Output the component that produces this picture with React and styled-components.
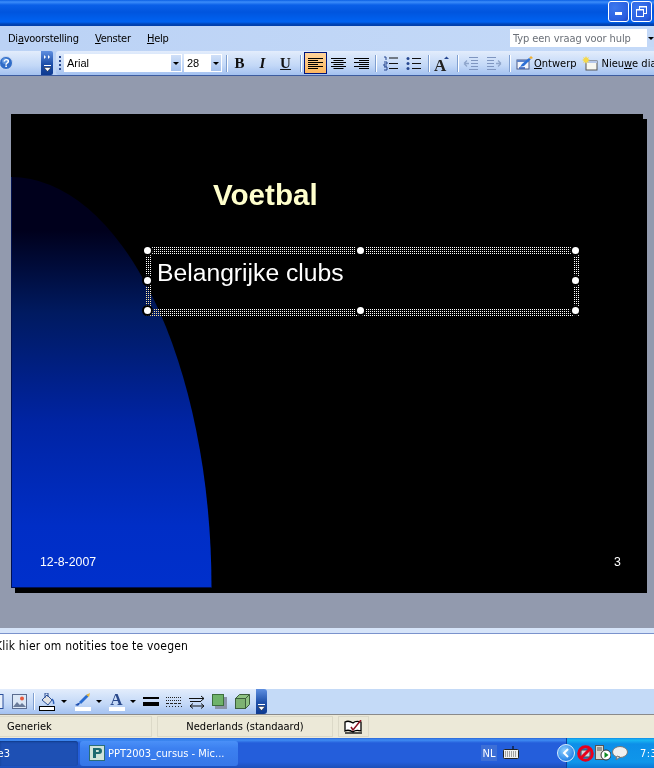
import React from "react";
import styled, { createGlobalStyle } from "styled-components";

const Global = createGlobalStyle`
  html, body { margin: 0; padding: 0; background: #929aae; }
  #root { width: 654px; height: 768px; overflow: hidden; }
  * { box-sizing: border-box; }
`;

const uiFont = `"DejaVu Sans Condensed", "Noto Sans", "Liberation Sans", sans-serif`;
const toolbarBg = `linear-gradient(#e3edfc 0%, #d5e4fa 25%, #c3d8f7 60%, #a3c1f0 100%)`;

const Screen = styled.div`
  width: 654px;
  height: 768px;
  display: flex;
  flex-direction: column;
  overflow: hidden;
  font-family: ${uiFont};
  font-size: 11px;
  color: #000;
`;

const TitleBar = styled.div`
  height: 26px;
  flex: none;
  display: flex;
  justify-content: flex-end;
  align-items: center;
  gap: 2px;
  padding: 0 2px 3px 0;
  background: linear-gradient(#0a5fe4 0, #3c8dfa 2px, #0a60e8 5px, #0055de 12px, #0060ee 20px, #0062f0 22px, #0045b8 24px, #003da8 26px);
`;

const WinButton = styled.div`
  width: 21px;
  height: 21px;
  border: 1px solid #fff;
  border-radius: 3px;
  background: radial-gradient(circle at 30% 30%, #3d78ee, #2a5fe0 70%, #1c46c8);
  display: flex;
  align-items: center;
  justify-content: center;
`;

const MenuBar = styled.div`
  height: 25px;
  flex: none;
  display: flex;
  align-items: center;
  padding-left: 8px;
  background: linear-gradient(90deg, #bbd2f5, #c5daf8);
`;

const MenuItem = styled.span`
  width: ${(p) => p.$w}px;
  flex: none;
  white-space: nowrap;
  letter-spacing: -0.25px;
  margin-bottom: 1px;
`;

const SearchBox = styled.div`
  margin-left: auto;
  margin-bottom: 1px;
  width: 144px;
  height: 18px;
  flex: none;
  display: flex;
  align-items: center;
  background: #fff;
  color: #6b7078;
  padding-left: 3px;
  position: relative;
  letter-spacing: -0.07px;
  white-space: nowrap;
`;

const SearchArrow = styled.div`
  position: absolute;
  right: 0;
  top: 0;
  width: 7px;
  height: 18px;
  background: #c3d8f7;
  display: flex;
  align-items: center;
  justify-content: flex-end;
`;

const Toolbar = styled.div`
  height: 25px;
  flex: none;
  display: flex;
  align-items: center;
  overflow: hidden;
  background: linear-gradient(90deg, #bbd2f5, #c5daf8);
  border-bottom: 1px solid #3d5c9f;
  white-space: nowrap;
`;

const HelpBlock = styled.div`
  width: 41px;
  height: 24px;
  flex: none;
  display: flex;
  align-items: center;
  background: ${toolbarBg};
`;

const Chevron = styled.div`
  width: 12px;
  height: 24px;
  flex: none;
  background: linear-gradient(#5f8fe0, #1c4ea8 55%, #0e3a90);
  border-radius: 0 2px 2px 0;
  display: flex;
  flex-direction: column;
  align-items: center;
  justify-content: space-between;
  padding: 4px 0 3px;
`;

const Strip = styled.div`
  height: 24px;
  flex: 1;
  min-width: 0;
  margin-left: 3px;
  padding-left: 3px;
  display: flex;
  align-items: center;
  background: ${toolbarBg};
  border-radius: 3px 0 0 3px;
  overflow: hidden;
`;

const Grip = styled.div`
  width: 2px;
  height: 15px;
  flex: none;
  margin-right: 3px;
  background: repeating-linear-gradient(#27478f 0 2px, transparent 2px 4px);
`;

const Combo = styled.div`
  width: ${(p) => p.$w}px;
  height: 18px;
  flex: none;
  margin-right: ${(p) => p.$mr || 0}px;
  background: #fff;
  display: flex;
  align-items: center;
  padding-left: 3px;
  font-family: "Liberation Sans", sans-serif;
  font-size: 11px;
  position: relative;
`;

const ComboArrow = styled.div`
  position: absolute;
  right: 0;
  top: 0;
  width: 12px;
  height: 18px;
  background: linear-gradient(#d0e0f8, #a6c2ee);
  border: 1px solid #fff;
  display: flex;
  align-items: center;
  justify-content: center;
`;

const Caret = styled.i`
  display: block;
  flex: none;
  width: 0;
  height: 0;
  border-left: 3px solid transparent;
  border-right: 3px solid transparent;
  border-top: 3px solid #000;
`;

const Sep = styled.div`
  width: 1px;
  height: 17px;
  flex: none;
  margin: 0 ${(p) => p.$r ?? 2}px 0 ${(p) => p.$l ?? 2}px;
  background: #7f9fd0;
  box-shadow: 1px 0 0 #fff;
`;

const ToolBtn = styled.div`
  width: 23px;
  height: 22px;
  flex: none;
  display: flex;
  align-items: center;
  justify-content: center;
  border: 1px solid ${(p) => (p.$active ? "#00157a" : "transparent")};
  background: ${(p) => (p.$active ? "linear-gradient(#ffd49c, #fdb75f)" : "transparent")};
`;

const Glyph = styled.span`
  font-family: "Liberation Serif", serif;
  font-size: 15px;
  font-weight: 700;
  font-style: ${(p) => (p.$italic ? "italic" : "normal")};
  text-decoration: ${(p) => (p.$under ? "underline" : "none")};
  color: #111;
  line-height: 1;
`;

const TextTool = styled.div`
  flex: none;
  display: flex;
  align-items: center;
  gap: ${(p) => p.$gap ?? 2}px;
  margin-left: ${(p) => p.$ml || 0}px;
`;

const Workspace = styled.div`
  height: 552px;
  flex: none;
  padding: 38px 0 0 11px;
  background: #929aae;
`;

const Slide = styled.div`
  width: 632px;
  height: 474px;
  position: relative;
  background: #000;
  box-shadow: 4px 5px 0 #000;
  font-family: "Liberation Sans", sans-serif;
`;

const Curve = styled.svg`
  position: absolute;
  left: 0;
  top: 0;
`;

const SlideTitle = styled.div`
  position: absolute;
  left: 202px;
  top: 61px;
  font-size: 29.6px;
  line-height: 40px;
  font-weight: 700;
  color: #ffffcc;
`;

const Placeholder = styled.div`
  position: absolute;
  left: 134px;
  top: 133px;
  width: 434px;
  height: 69px;
  padding: 11px 0 0 12px;
  color: #fff;
  font-size: 24.7px;
  line-height: 30px;
  &::before {
    content: "";
    position: absolute;
    inset: 0;
    padding: 7px 6px;
    background: conic-gradient(#fff 0 25%, transparent 0) 0 0 / 2px 2px;
    mix-blend-mode: difference;
    -webkit-mask: linear-gradient(#000 0 0) content-box, linear-gradient(#000 0 0);
    -webkit-mask-composite: xor;
    mask-composite: exclude;
  }
`;

const Handle = styled.i`
  position: absolute;
  left: ${(p) => p.$x}px;
  top: ${(p) => p.$y}px;
  width: 7px;
  height: 7px;
  border-radius: 50%;
  background: #fff;
  box-shadow: 0 0 0 2px #000;
`;

const SlideFoot = styled.div`
  position: absolute;
  left: ${(p) => p.$x}px;
  top: 441px;
  font-size: 12.3px;
  line-height: 14px;
  color: #fff;
`;

const NotesBand = styled.div`
  height: 6px;
  flex: none;
  background: #d6e4f9;
  border-bottom: 1px solid #7a92cc;
`;

const Notes = styled.div`
  height: 55px;
  flex: none;
  background: #fff;
  padding: 5px 0 0 0;
  font-size: 12px;
  line-height: 15px;
`;

const NotesText = styled.div`
  margin-left: -5px;
  white-space: nowrap;
  letter-spacing: 0.19px;
`;

const DrawBar = styled.div`
  height: 26px;
  flex: none;
  display: flex;
  align-items: center;
  background: #c4daf7;
  border-bottom: 1px solid #8a8a8a;
`;

const DrawStrip = styled.div`
  width: 256px;
  height: 25px;
  flex: none;
  display: flex;
  align-items: center;
  overflow: hidden;
  background: ${toolbarBg};
`;

const DrawEnd = styled.div`
  width: 11px;
  height: 25px;
  flex: none;
  background: linear-gradient(#5f8fe0, #1c4ea8 55%, #0e3a90);
  border-radius: 0 3px 3px 0;
  display: flex;
  align-items: flex-end;
  justify-content: center;
  padding-bottom: 3px;
`;

const DrawTool = styled.div`
  width: ${(p) => p.$w}px;
  height: 24px;
  flex: none;
  margin-left: ${(p) => p.$ml || 0}px;
  display: flex;
  align-items: center;
  justify-content: center;
  gap: ${(p) => p.$gap || 0}px;
`;

const ColorA = styled.span`
  display: flex;
  flex-direction: column;
  align-items: center;
  flex: none;
  width: 16px;
  font-family: "Liberation Serif", serif;
  font-weight: 700;
  font-size: 17px;
  line-height: 13px;
  color: #2b4a8c;
  &::after {
    content: "";
    width: 16px;
    height: 4px;
    margin-top: 1px;
    background: #fff;
  }
`;

const StatusBar = styled.div`
  height: 23px;
  flex: none;
  display: flex;
  align-items: stretch;
  gap: 5px;
  padding: 1px 0 1px 0;
  background: #ece9d8;
`;

const StatusCell = styled.div`
  width: ${(p) => p.$w}px;
  flex: none;
  border: 1px solid #dcd9c8;
  border-left: ${(p) => (p.$noLeft ? "none" : "1px solid #dcd9c8")};
  display: flex;
  align-items: center;
  justify-content: ${(p) => (p.$center ? "center" : "flex-start")};
  padding-left: ${(p) => (p.$center ? 0 : 7)}px;
`;

const TaskBar = styled.div`
  height: 30px;
  flex: none;
  display: flex;
  align-items: center;
  color: #fff;
  background: linear-gradient(#2a66d8 0, #3f8cf3 2px, #245edb 5px, #245edb 24px, #1d4fb8 30px);
`;

const TaskActive = styled.div`
  width: 78px;
  height: 25px;
  flex: none;
  overflow: hidden;
  display: flex;
  justify-content: flex-end;
  align-items: center;
  padding-right: 68px;
  border-radius: 0 3px 3px 0;
  background: #1e50b4;
  box-shadow: inset 0 1px 2px #103a88;
  white-space: nowrap;
`;

const TaskButton = styled.div`
  width: 158px;
  height: 25px;
  flex: none;
  margin-left: 2px;
  display: flex;
  align-items: center;
  gap: 3px;
  padding-left: 9px;
  border-radius: 3px;
  background: linear-gradient(#4a90f8, #3c80f0 30%, #3677e8);
  white-space: nowrap;
`;

const LangBox = styled.div`
  width: 16px;
  height: 16px;
  flex: none;
  margin-left: 243px;
  display: flex;
  align-items: center;
  justify-content: center;
  background: #3d6fd6;
`;

const Keyboard = styled.div`
  width: 16px;
  flex: none;
  margin-left: 6px;
  display: flex;
`;

const Tray = styled.div`
  flex: 1;
  height: 30px;
  margin-left: 47px;
  display: flex;
  align-items: center;
  position: relative;
  padding-left: 10px;
  gap: 1px;
  border-left: 1px solid #0d3f9e;
  background: linear-gradient(#0f8be8 0, #19b8f3 2px, #0d8fe8 6px, #0f96ea 24px, #0c78d6 30px);
`;

const TrayToggle = styled.div`
  position: absolute;
  left: -10px;
  top: 6px;
  width: 18px;
  height: 18px;
  border-radius: 50%;
  background: radial-gradient(circle at 40% 35%, #8fd0ff, #2a86e8 70%);
  border: 1px solid #dbeeff;
  display: flex;
  align-items: center;
  justify-content: center;
`;

const Clock = styled.span`
  margin-left: 11px;
  letter-spacing: 0.4px;
`;

const Svg = ({ w = 16, h = 16, children }) => (
  <svg width={w} height={h} viewBox={`0 0 ${w} ${h}`} style={{ display: "block", flex: "none" }}>
    {children}
  </svg>
);

const Align = ({ mode }) => {
  const rows = [0, 1, 2, 3, 4, 5];
  return (
    <Svg w={15} h={13}>
      {rows.map((r) => {
        const len = r % 2 === 0 ? 15 : 10;
        const x = mode === "left" ? 0 : mode === "right" ? 15 - len : (15 - len) / 2;
        return <rect key={r} x={x} y={r * 2 + 1} width={len} height={1} fill="#000" />;
      })}
    </Svg>
  );
};

const NumList = () => (
  <Svg w={15} h={15}>
    <path d="M1 1h2v3M1 6h3v2H1v2h3M1 11h3v3H1" fill="none" stroke="#27478f" strokeWidth="1" />
    <path d="M6 2h9M6 7.500h9M6 12.500h9" stroke="#111" strokeWidth="1" />
  </Svg>
);

const BulList = () => (
  <Svg w={15} h={15}>
    <circle cx="2" cy="2.500" r="1.500" fill="#27478f" />
    <circle cx="2" cy="7.500" r="1.500" fill="#27478f" />
    <circle cx="2" cy="12.500" r="1.500" fill="#27478f" />
    <path d="M6 2.500h9M6 7.500h9M6 12.500h9" stroke="#111" strokeWidth="1" />
  </Svg>
);

const Indent = ({ flip }) => (
  <Svg w={16} h={15}>
    <g transform={flip ? "translate(16 0) scale(-1 1)" : undefined}>
      <path d="M6 1.500h9M8 4.500h7M8 7.500h7M8 10.500h7M6 13.500h9" stroke="#7f96c0" strokeWidth="1" />
      <path d="M6 7.500H1M1 7.500l3-3M1 7.500l3 3" stroke="#8fa6cc" strokeWidth="1.300" fill="none" />
    </g>
  </Svg>
);

const GrowA = () => (
  <Svg w={16} h={15}>
    <text x="0" y="14.500" fontFamily="Liberation Serif" fontWeight="700" fontSize="17" fill="#222">A</text>
    <path d="M10 3l2.500-2.500L15 3z" fill="#27478f" />
  </Svg>
);

const DesignIcon = () => (
  <Svg w={17} h={15}>
    <rect x="1" y="4" width="12" height="9" fill="#f4f6fc" stroke="#4a5a88" />
    <rect x="1" y="4" width="12" height="2" fill="#5d82c8" />
    <path d="M4 11l2-3 7-6 2 1-7 7z" fill="#2b6fd6" />
    <path d="M13 2l2-2 2 2-2 1z" fill="#f0b030" />
    <path d="M3 12h6" stroke="#2b58b8" strokeWidth="1.500" />
  </Svg>
);

const NewSlideIcon = () => (
  <Svg w={16} h={15}>
    <rect x="4" y="5" width="11" height="9" fill="#f7f7f0" stroke="#555" />
    <rect x="4" y="5" width="11" height="2" fill="#b6c8ea" />
    <path d="M4 0l1 2 2-1-1 2 2 1-2 1 1 2-2-1-1 2-1-2-2 1 1-2-2-1 2-1-1-2 2 1z" fill="#f5d94a" />
  </Svg>
);

const HelpIcon = () => (
  <Svg w={14} h={14}>
    <circle cx="6" cy="7" r="6.500" fill="#2f6cc8" stroke="#c9d9f2" />
    <circle cx="5" cy="5" r="3" fill="#7fb0ee" opacity="0.6" />
    <text x="3" y="11" fontFamily="Liberation Sans" fontWeight="700" fontSize="11" fill="#fff">?</text>
  </Svg>
);

const ChevTop = () => (
  <Svg w={7} h={5}>
    <path d="M0 0l2 2-2 2zM4 0l2 2-2 2z" fill="#fff" />
  </Svg>
);

const ChevBottom = () => (
  <Svg w={7} h={7}>
    <path d="M0 0h7v1H0z" fill="#fff" />
    <path d="M0 2.500h7L3.500 6.500z" fill="#fff" stroke="#000" strokeWidth="0.400" />
  </Svg>
);

const PictureIcon = () => (
  <Svg w={15} h={15}>
    <rect x="0.500" y="0.500" width="14" height="14" fill="#dbe7f6" stroke="#5a6c90" />
    <path d="M1 13l4-5 3 3 2-2 4 4z" fill="#6a7b9a" />
    <circle cx="10" cy="4.500" r="2" fill="#e8583c" />
  </Svg>
);

const BoxIcon = () => (
  <Svg w={4} h={15}>
    <rect x="-10" y="0.500" width="13" height="14" fill="#e8f0fb" stroke="#2a4f9c" />
  </Svg>
);

const Bucket = () => (
  <Svg w={16} h={18}>
    <path d="M3 7l5-5 5 5-4 5z" fill="#e4e4e4" stroke="#2c4f94" />
    <path d="M6 5V0h3v4" fill="none" stroke="#2c4f94" />
    <path d="M13 6c2 2 2 3 1.500 5" stroke="#2c5fb8" strokeWidth="1.500" fill="none" />
    <rect x="0.500" y="13.500" width="15" height="4" fill="#fff" stroke="#000" />
  </Svg>
);

const Pen = () => (
  <Svg w={16} h={18}>
    <path d="M0 12c2-1 4-3 5-2l-1 2c-1 1-2 1-4 0z" fill="#1e4fb0" />
    <path d="M4 9l7-7 3-1-1 3-7 7z" fill="#2a6cd0" />
    <path d="M11 2l4-2-1 4z" fill="#e8b840" />
    <rect x="0" y="14" width="16" height="4" fill="#fff" />
  </Svg>
);

const LineStyle = () => (
  <Svg w={16} h={12}>
    <rect x="0" y="1" width="16" height="2" fill="#000" />
    <rect x="0" y="6" width="16" height="4" fill="#000" />
  </Svg>
);

const DashStyle = () => (
  <Svg w={16} h={12}>
    <path d="M0 1.500h16M0 4.500h16" stroke="#222" strokeDasharray="1 1" />
    <path d="M0 7.500h16" stroke="#222" strokeDasharray="3 1" />
    <path d="M0 10.500h16" stroke="#222" strokeDasharray="1 2" />
  </Svg>
);

const Arrows = () => (
  <Svg w={16} h={14}>
    <path d="M0 3.500h15M12 1l3 2.500-3 2.500" stroke="#111" fill="none" />
    <path d="M1 6.500h11" stroke="#111" />
    <path d="M1 11h14M4 8.500L1 11l3 2.500M12 8.500l3 2.500-3 2.500" stroke="#111" fill="none" />
  </Svg>
);

const ShadowBox = () => (
  <Svg w={15} h={15}>
    <rect x="3" y="3" width="12" height="12" fill="#8a93a8" />
    <rect x="0.500" y="0.500" width="11" height="11" fill="#6fb36a" stroke="#3c6e3c" />
  </Svg>
);

const Cube = () => (
  <Svg w={15} h={15}>
    <path d="M0.500 4.500l4-4h10v10l-4 4z" fill="#8ec283" stroke="#3c5e3c" />
    <rect x="0.500" y="4.500" width="10" height="10" fill="#7db272" stroke="#3c5e3c" />
    <path d="M10.500 4.500l4-4" stroke="#3c5e3c" />
  </Svg>
);

const BookIcon = () => (
  <Svg w={19} h={14}>
    <path d="M1 2c2-1 5-1 8 1 2-2 5-2 8-1v9c-3-1-6-1-8 1-3-2-6-2-8-1z" fill="#fff" stroke="#000" strokeWidth="1.300" />
    <path d="M1 13h17" stroke="#000" strokeWidth="1.300" />
    <path d="M7 7l2 3 8-10" stroke="#8a1020" strokeWidth="1.500" fill="none" />
  </Svg>
);

const PptIcon = () => (
  <Svg w={16} h={16}>
    <rect x="0.500" y="0.500" width="15" height="15" fill="#cfe3da" stroke="#2a6e78" />
    <path d="M4 3h6a2.500 2.500 0 0 1 0 6H7v4H4zM7 5v2h2a1 1 0 0 0 0-2z" fill="#1c6a70" />
  </Svg>
);

const KeyboardIcon = () => (
  <Svg w={16} h={14}>
    <path d="M10 0v3" stroke="#000" />
    <rect x="0.500" y="3.500" width="15" height="9" rx="1" fill="#f0f0f0" stroke="#222" />
    <path d="M2 6h12M2 8h12M2 10h12" stroke="#555" strokeDasharray="1 1" />
  </Svg>
);

const BlockedIcon = () => (
  <Svg w={17} h={17}>
    <rect x="4" y="5" width="9" height="7" fill="#cfd6e2" stroke="#444" />
    <circle cx="8.500" cy="8.500" r="6.800" fill="none" stroke="#e8001c" strokeWidth="3" />
    <path d="M3.500 13.500l10-10" stroke="#e8001c" strokeWidth="3" />
  </Svg>
);

const ServerIcon = () => (
  <Svg w={16} h={16}>
    <rect x="0.500" y="0.500" width="8" height="14" fill="#d9d9d0" stroke="#555" />
    <path d="M2 3h5M2 5h5" stroke="#555" />
    <circle cx="11" cy="10" r="5" fill="#fff" stroke="#333" />
    <path d="M9.500 7v6l4-3z" fill="#0a8a1c" />
  </Svg>
);

const BalloonIcon = () => (
  <Svg w={16} h={15}>
    <ellipse cx="8" cy="6" rx="7.500" ry="5.500" fill="#f0f0f0" stroke="#777" />
    <path d="M5 10l-1 4 4-3z" fill="#f0f0f0" stroke="#777" />
  </Svg>
);

const Minimize = () => (
  <Svg w={9} h={9}>
    <rect x="1" y="5" width="7" height="3" fill="#fff" />
  </Svg>
);

const Restore = () => (
  <Svg w={13} h={13}>
    <rect x="4.500" y="1.500" width="7" height="7" fill="none" stroke="#fff" />
    <rect x="1.500" y="4.500" width="7" height="7" fill="#2f62e2" stroke="#fff" />
    <path d="M4 2h8M1 5h8" stroke="#fff" />
  </Svg>
);

const ChevLeft = () => (
  <Svg w={8} h={10}>
    <path d="M6 1L2 5l4 4" fill="none" stroke="#fff" strokeWidth="2" />
  </Svg>
);

const handles = [
  [-1, 0], [-1, 30], [-1, 60],
  [212, 0], [212, 60],
  [427, 0], [427, 30], [427, 60],
];

export default function App() {
  return (
    <Screen>
      <Global />
      <TitleBar>
        <WinButton><Minimize /></WinButton>
        <WinButton><Restore /></WinButton>
      </TitleBar>
      <MenuBar>
        <MenuItem $w={87}>Di<u>a</u>voorstelling</MenuItem>
        <MenuItem $w={52}><u>V</u>enster</MenuItem>
        <MenuItem $w={40}><u>H</u>elp</MenuItem>
        <SearchBox>
          Typ een vraag voor hulp
          <SearchArrow><Caret /></SearchArrow>
        </SearchBox>
      </MenuBar>
      <Toolbar>
        <HelpBlock><HelpIcon /></HelpBlock>
        <Chevron><ChevTop /><ChevBottom /></Chevron>
        <Strip>
          <Grip />
          <Combo $w={118} $mr={2}>Arial<ComboArrow><Caret /></ComboArrow></Combo>
          <Combo $w={38}>28<ComboArrow><Caret /></ComboArrow></Combo>
          <Sep $l={4} $r={1} />
          <ToolBtn><Glyph>B</Glyph></ToolBtn>
          <ToolBtn><Glyph $italic>I</Glyph></ToolBtn>
          <ToolBtn><Glyph $under>U</Glyph></ToolBtn>
          <Sep $l={3} $r={3} />
          <ToolBtn $active><Align mode="left" /></ToolBtn>
          <ToolBtn><Align mode="center" /></ToolBtn>
          <ToolBtn><Align mode="right" /></ToolBtn>
          <Sep $l={2} $r={3} />
          <ToolBtn><NumList /></ToolBtn>
          <ToolBtn><BulList /></ToolBtn>
          <Sep $l={3} $r={1} />
          <ToolBtn><GrowA /></ToolBtn>
          <Sep $l={4} $r={1} />
          <ToolBtn><Indent /></ToolBtn>
          <ToolBtn><Indent flip /></ToolBtn>
          <Sep $l={4} $r={1} />
          <TextTool $ml={5} $gap={1}><DesignIcon /><span><u>O</u>ntwerp</span></TextTool>
          <TextTool $ml={6} $gap={3}><NewSlideIcon /><span>Nieu<u>w</u>e dia</span></TextTool>
        </Strip>
      </Toolbar>
      <Workspace>
        <Slide>
          <Curve width="202" height="474" viewBox="0 0 202 474">
            <defs>
              <linearGradient id="curveFill" x1="0" y1="0" x2="0" y2="1">
                <stop offset="0.13" stopColor="#00001c" />
                <stop offset="0.33" stopColor="#001a60" />
                <stop offset="0.6" stopColor="#0024a4" />
                <stop offset="0.85" stopColor="#002ec6" />
                <stop offset="1" stopColor="#0030cc" />
              </linearGradient>
            </defs>
            <path d="M0 63 A200.500 410.500 0 0 1 200.500 473.500 H0 Z" fill="url(#curveFill)" />
            <path d="M0.500 63 V473.500 H200.500" fill="none" stroke="#001050" />
          </Curve>
          <SlideTitle>Voetbal</SlideTitle>
          <Placeholder>
            Belangrijke clubs
            {handles.map(([x, y]) => <Handle key={`${x}-${y}`} $x={x} $y={y} />)}
          </Placeholder>
          <SlideFoot $x={29}>12-8-2007</SlideFoot>
          <SlideFoot $x={603}>3</SlideFoot>
        </Slide>
      </Workspace>
      <NotesBand />
      <Notes><NotesText>Klik hier om notities toe te voegen</NotesText></Notes>
      <DrawBar>
        <DrawStrip>
          <BoxIcon />
          <DrawTool $w={15} $ml={8}><PictureIcon /></DrawTool>
          <Sep $l={6} $r={5} />
          <DrawTool $w={28} $gap={6}><Bucket /><Caret /></DrawTool>
          <DrawTool $w={28} $ml={7} $gap={5}><Pen /><Caret /></DrawTool>
          <DrawTool $w={28} $ml={6} $gap={5}><ColorA>A</ColorA><Caret /></DrawTool>
          <DrawTool $w={23} $ml={3}><LineStyle /></DrawTool>
          <DrawTool $w={23}><DashStyle /></DrawTool>
          <DrawTool $w={23}><Arrows /></DrawTool>
          <DrawTool $w={23}><ShadowBox /></DrawTool>
          <DrawTool $w={23}><Cube /></DrawTool>
        </DrawStrip>
        <DrawEnd><ChevBottom /></DrawEnd>
      </DrawBar>
      <StatusBar>
        <StatusCell $w={152} $noLeft>Generiek</StatusCell>
        <StatusCell $w={176} $center>Nederlands (standaard)</StatusCell>
        <StatusCell $w={31} $center><BookIcon /></StatusCell>
      </StatusBar>
      <TaskBar>
        <TaskActive>Presentatie3</TaskActive>
        <TaskButton><PptIcon />PPT2003_cursus - Mic...</TaskButton>
        <LangBox>NL</LangBox>
        <Keyboard><KeyboardIcon /></Keyboard>
        <Tray>
          <TrayToggle><ChevLeft /></TrayToggle>
          <BlockedIcon />
          <ServerIcon />
          <BalloonIcon />
          <Clock>7:31</Clock>
        </Tray>
      </TaskBar>
    </Screen>
  );
}
